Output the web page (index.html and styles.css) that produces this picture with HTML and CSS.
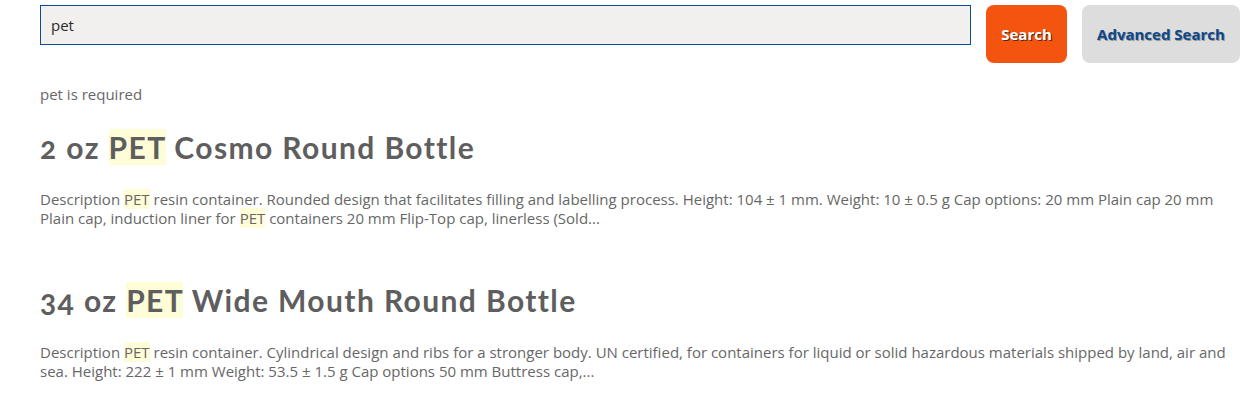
FILE: index.html
```html
<!DOCTYPE html>
<html lang="en">
<head>
<meta charset="utf-8">
<title>Search</title>
<link rel="stylesheet" href="styles.css">
</head>
<body>
<div class="page">
  <form class="search-bar">
    <input class="search-input" type="text" value="pet">
    <button class="btn btn-search" type="button">Search</button>
    <button class="btn btn-advanced" type="button">Advanced Search</button>
  </form>
  <p class="notice">pet is required</p>
  <div class="results">
    <div class="result">
      <h2 class="result-title">2 oz <mark>PET</mark> Cosmo Round Bottle</h2>
      <p class="result-desc">Description <mark>PET</mark> resin container. Rounded design that facilitates filling and labelling process. Height: 104 ± 1 mm. Weight: 10 ± 0.5 g Cap options: 20 mm Plain cap 20 mm Plain cap, induction liner for <mark>PET</mark> containers 20 mm Flip-Top cap, linerless (Sold...</p>
    </div>
    <div class="result">
      <h2 class="result-title">34 oz <mark>PET</mark> Wide Mouth Round Bottle</h2>
      <p class="result-desc">Description <mark>PET</mark> resin container. Cylindrical design and ribs for a stronger body. UN certified, for containers for liquid or solid hazardous materials shipped by land, air and sea. Height: 222 ± 1 mm Weight: 53.5 ± 1.5 g Cap options 50 mm Buttress cap,...</p>
    </div>
  </div>
</div>
</body>
</html>
```

FILE: styles.css
```css
* { box-sizing: border-box; }
html, body { margin: 0; padding: 0; background: #ffffff; }
body {
  font-family: "Open Sans", "Liberation Sans", sans-serif;
  color: #676767;
  font-size: 15px;
}
.page { padding: 5px 4px 0 40px; }
.search-bar {
  display: flex;
  align-items: flex-start;
  margin: 0;
}
.search-input {
  width: 931px;
  height: 40px;
  border: 1px solid #0b4c97;
  background: #f1f0ee;
  padding: 0 10px;
  font-family: "Open Sans", sans-serif;
  font-size: 15px;
  color: #2b2b2b;
  outline: none;
  border-radius: 0;
}
.btn {
  height: 58px;
  border: none;
  border-radius: 8px;
  font-family: "Open Sans", sans-serif;
  font-weight: 700;
  font-size: 15px;
  cursor: pointer;
  padding: 0;
}
.btn-search {
  margin-left: 15px;
  width: 81px;
  background: #f3540f;
  color: #ffffff;
  text-shadow: 1px 1px 0 #5a2a12;
}
.btn-advanced {
  margin-left: 15px;
  width: 158px;
  background: #dddddd;
  color: #0e4788;
  text-shadow: 1px 1px 0 #9a9a9a;
}
.notice {
  margin: 21px 0 0;
  line-height: 20px;
}
mark {
  background: #fffcd8;
  color: inherit;
}
.result-title {
  font-family: "Lato", sans-serif;
  font-weight: 700;
  font-size: 30px;
  line-height: 36px;
  letter-spacing: 1.4px;
  font-variant-numeric: oldstyle-nums;
  color: #5e5e5e;
  margin: 25px 0 0;
}
.result-desc {
  margin: 25px 0 0;
  line-height: 19px;
}
.result + .result .result-title { margin-top: 54px; }
```
